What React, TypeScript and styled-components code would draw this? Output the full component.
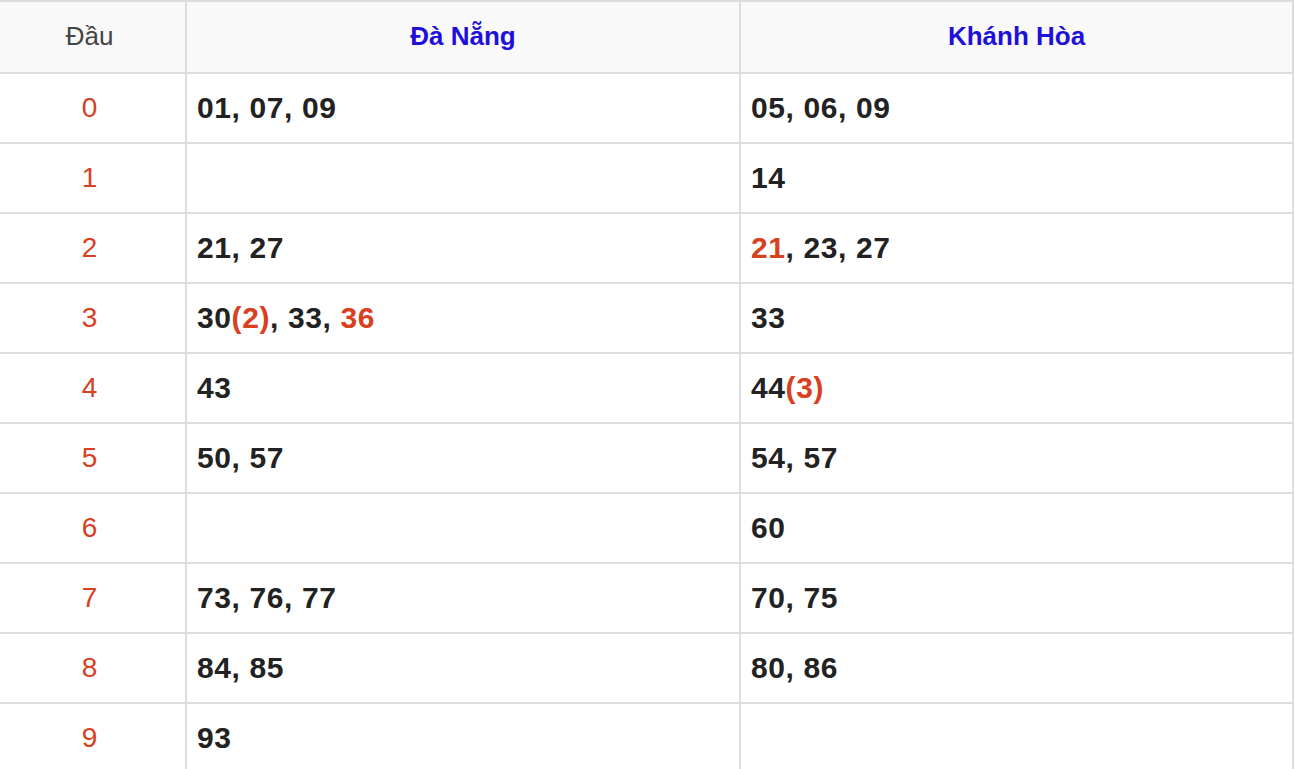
import React from "react";
import styled, { createGlobalStyle } from "styled-components";

const Global = createGlobalStyle`
  html, body { margin: 0; padding: 0; background: #fff; }
  body { font-family: "Liberation Sans", Arial, sans-serif; }
`;

const Table = styled.table`
  width: 1294px;
  border-collapse: collapse;
  table-layout: fixed;
  border-top: 2px solid #ddd;
  border-right: 2px solid #ddd;
`;

const HeadCell = styled.th<{ $first?: boolean }>`
  height: 68px;
  padding: ${(p) => (p.$first ? "0 6px 2px 0" : "0 0 2px 0")};
  background: #f9f9f9;
  border-bottom: 2px solid #ddd;
  border-left: ${(p) => (p.$first ? "none" : "2px solid #ddd")};
  text-align: center;
  vertical-align: middle;
  font-size: 26px;
  font-weight: ${(p) => (p.$first ? 400 : 700)};
  color: ${(p) => (p.$first ? "#444" : "#1f10d9")};
`;

const IndexCell = styled.td`
  height: 68px;
  padding: 0 6px 0 0;
  border-bottom: 2px solid #ddd;
  text-align: center;
  vertical-align: middle;
  font-size: 28px;
  color: #d8401f;
`;

const NumCell = styled.td`
  height: 68px;
  padding: 0 0 0 10px;
  border-bottom: 2px solid #ddd;
  border-left: 2px solid #ddd;
  vertical-align: middle;
  font-size: 30px;
  letter-spacing: 0.6px;
  font-weight: 700;
  color: #222;
`;

const Hot = styled.span`
  color: #d8401f;
`;

type Item = { n: string; hot?: boolean; count?: number };

const dn: Item[][] = [
  [{ n: "01" }, { n: "07" }, { n: "09" }],
  [],
  [{ n: "21" }, { n: "27" }],
  [{ n: "30", count: 2 }, { n: "33" }, { n: "36", hot: true }],
  [{ n: "43" }],
  [{ n: "50" }, { n: "57" }],
  [],
  [{ n: "73" }, { n: "76" }, { n: "77" }],
  [{ n: "84" }, { n: "85" }],
  [{ n: "93" }],
];

const kh: Item[][] = [
  [{ n: "05" }, { n: "06" }, { n: "09" }],
  [{ n: "14" }],
  [{ n: "21", hot: true }, { n: "23" }, { n: "27" }],
  [{ n: "33" }],
  [{ n: "44", count: 3 }],
  [{ n: "54" }, { n: "57" }],
  [{ n: "60" }],
  [{ n: "70" }, { n: "75" }],
  [{ n: "80" }, { n: "86" }],
  [],
];

function Nums({ items }: { items: Item[] }) {
  return (
    <>
      {items.map((it, i) => (
        <React.Fragment key={i}>
          {i > 0 && ", "}
          {it.hot ? <Hot>{it.n}</Hot> : it.n}
          {it.count ? <Hot>({it.count})</Hot> : null}
        </React.Fragment>
      ))}
    </>
  );
}

export default function App() {
  return (
    <>
      <Global />
      <Table>
        <colgroup>
          <col style={{ width: 186 }} />
          <col style={{ width: 554 }} />
          <col />
        </colgroup>
        <thead>
          <tr>
            <HeadCell $first>Đầu</HeadCell>
            <HeadCell>Đà Nẵng</HeadCell>
            <HeadCell>Khánh Hòa</HeadCell>
          </tr>
        </thead>
        <tbody>
          {dn.map((row, i) => (
            <tr key={i}>
              <IndexCell>{i}</IndexCell>
              <NumCell>
                <Nums items={row} />
              </NumCell>
              <NumCell>
                <Nums items={kh[i]} />
              </NumCell>
            </tr>
          ))}
        </tbody>
      </Table>
    </>
  );
}
